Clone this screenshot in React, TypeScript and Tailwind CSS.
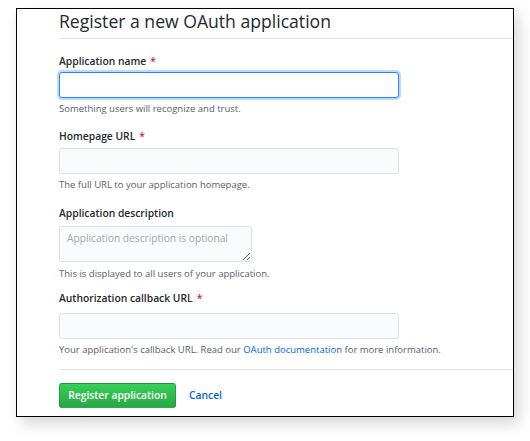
import React from "react";

const font = { fontFamily: '"Open Sans", "Noto Sans", Arial, sans-serif' };

function Label({ children, star = true, className = "" }: { children: React.ReactNode; star?: boolean; className?: string }) {
  return (
    <div className={`text-[10.3px] leading-[16px] font-semibold text-[#24292e] ${className}`}>
      {children}
      {star && <span className="text-[#cb2431] ml-[4px]">*</span>}
    </div>
  );
}

function Help({ children, className = "" }: { children: React.ReactNode; className?: string }) {
  return <div className={`text-[9.5px] leading-[16px] text-[#586069] ${className}`}>{children}</div>;
}

export default function App() {
  return (
    <div className="w-[530px] h-[441px] bg-white overflow-hidden pt-[8px] pl-[16px]" style={font}>
      <div className="w-[498px] h-[409px] border border-black bg-white shadow-[5px_7px_14px_rgba(0,0,0,0.16)] pl-[42px]">
        <div className="h-[30px] border-b border-[#e1e4e8] text-[17.6px] leading-[24px] text-[#24292e]">
          Register a new OAuth application
        </div>
        <Label className="mt-[14px]">Application name</Label>
        <input className="block mt-[3px] w-[340px] h-[26px] rounded-[3px] border border-[#2188ff] bg-white shadow-[0_0_0_2px_rgba(3,102,214,0.25)] outline-none" />
        <Help className="mt-[3px]">Something users will recognize and trust.</Help>

        <Label className="mt-[11px]">Homepage URL</Label>
        <input className="block mt-[4px] w-[340px] h-[26px] rounded-[3px] border border-[#dfe2e5] bg-[#fafbfc] outline-none" />
        <Help className="mt-[3px]">The full URL to your application homepage.</Help>

        <Label className="mt-[12px]" star={false}>Application description</Label>
        <textarea
          placeholder="Application description is optional"
          className="block mt-[5px] w-[193px] h-[36px] rounded-[3px] border border-[#dfe2e5] bg-[#fafbfc] outline-none px-[7px] py-[3px] text-[10.2px] leading-[16px] placeholder:text-[#a2a8ae]"
          style={font}
        />
        <Help className="mt-[4px]">This is displayed to all users of your application.</Help>

        <Label className="mt-[8px]">Authorization callback URL</Label>
        <input className="block mt-[7px] w-[340px] h-[26px] rounded-[3px] border border-[#dfe2e5] bg-[#fafbfc] outline-none" />
        <Help className="mt-[3px]">
          Your application's callback URL. Read our <span className="text-[#0366d6]">OAuth documentation</span> for more information.
        </Help>

        <div className="mt-[11px] border-t border-[#e1e4e8]" />
        <div className="mt-[13px] flex items-center">
          <button
            className="w-[117px] h-[25px] rounded-[3px] border border-[rgba(27,31,35,0.2)] bg-[linear-gradient(#34d058,#28a745)] text-white text-[10.3px] font-semibold"
            style={font}
          >
            Register application
          </button>
          <span className="ml-[13px] text-[#0366d6] text-[10.3px] font-semibold">Cancel</span>
        </div>
      </div>
    </div>
  );
}
